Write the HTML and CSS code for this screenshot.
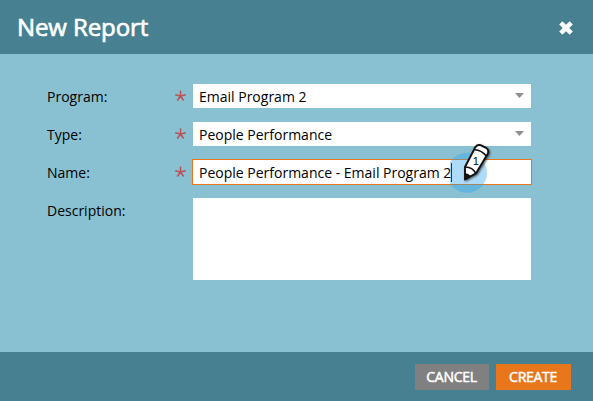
FILE: index.html
```html
<!DOCTYPE html>
<html lang="en">
<head>
<meta charset="utf-8">
<title>New Report</title>
<link rel="stylesheet" href="styles.css">
</head>
<body>
<div class="dialog">
  <header class="header">
    <h1 class="title">New Report</h1>
    <svg class="close" width="16" height="16" viewBox="0 0 16 16"><path d="M2.8 2.8L13.2 13.2M13.2 2.8L2.8 13.2"/></svg>
  </header>
  <main class="form">
    <div class="row">
      <span class="label">Program:</span>
      <svg class="required" width="12" height="12" viewBox="0 0 12 12"><path d="M5.5 6V.6M5.5 6L.2 4.7M5.5 6L10.8 4.7M5.5 6L2.3 10.5M5.5 6L8.7 10.5"/></svg>
      <div class="field select"><span>Email Program 2</span><i class="arrow"></i></div>
    </div>
    <div class="row">
      <span class="label">Type:</span>
      <svg class="required" width="12" height="12" viewBox="0 0 12 12"><path d="M5.5 6V.6M5.5 6L.2 4.7M5.5 6L10.8 4.7M5.5 6L2.3 10.5M5.5 6L8.7 10.5"/></svg>
      <div class="field select"><span>People Performance</span><i class="arrow"></i></div>
    </div>
    <div class="row">
      <span class="label">Name:</span>
      <svg class="required" width="12" height="12" viewBox="0 0 12 12"><path d="M5.5 6V.6M5.5 6L.2 4.7M5.5 6L10.8 4.7M5.5 6L2.3 10.5M5.5 6L8.7 10.5"/></svg>
      <div class="field focused"><span>People Performance - Email Program 2</span><i class="caret"></i></div>
    </div>
    <div class="row">
      <span class="label">Description:</span>
      <div class="field area"></div>
    </div>
  </main>
  <footer class="footer">
    <div class="button cancel">CANCEL</div>
    <div class="button create">CREATE</div>
  </footer>
  <svg class="marker" width="50" height="60" viewBox="450 140 50 60">
    <circle class="halo" cx="467" cy="172.8" r="20"/>
    <g class="pencil">
      <path class="body" d="M465 167L475.3 147.3Q477 144.2 480.5 145.2L486 147.8Q489.2 149.8 487.9 153.4L475.9 173.4L465 179.5Z"/>
      <path class="line" d="M474.2 149.7Q481 149.4 486.2 156"/>
      <path class="line" d="M465 167Q472.5 166.8 475.9 173.4"/>
      <path class="tip" d="M464.9 173.2Q469 173.4 471 176.5L465 179.8Z"/>
    </g>
    <text class="step" x="472.7" y="164.5">1</text>
  </svg>
</div>
</body>
</html>
```

FILE: styles.css
```css
* { box-sizing: border-box; }
body { margin: 0; font-family: "Open Sans", "Noto Sans", sans-serif; font-size: 14px; color: #000; }
.dialog {
  position: relative;
  display: grid;
  grid-template-rows: 54px 298px 49px;
  width: 593px;
  height: 401px;
  background: #89c1d2;
}
.header {
  display: flex;
  align-items: center;
  justify-content: space-between;
  padding: 1px 19px 0 17px;
  background: #468091;
}
.title {
  margin: -2px 0 0;
  color: #fff;
  font-size: 24px;
  font-weight: 400;
  line-height: 34px;
  letter-spacing: -0.1px;
  -webkit-text-stroke: 0.7px #fff;
}
.close path { fill: none; stroke: #fff; stroke-width: 4.6; }
.form {
  display: flex;
  flex-direction: column;
  gap: 14px;
  padding: 30px 0 0 47px;
}
.row { display: grid; grid-template-columns: 128px 18px 338px; height: 24px; }
.label { line-height: 25px; }
.required { margin-top: 6px; }
.required path { fill: none; stroke: #bd5053; stroke-width: 1.5; }
.field {
  grid-column: 3;
  display: flex;
  align-items: center;
  height: 24px;
  padding: 1px 6px 0;
  background: #fff;
  line-height: 24px;
  white-space: nowrap;
}
.select { justify-content: space-between; padding-right: 7px; }
.arrow {
  width: 9px;
  height: 5px;
  margin-top: -2px;
  background: #909090;
  clip-path: polygon(0 0, 100% 0, 50% 100%);
}
.focused { outline: 1px solid #e8761a; }
.caret { width: 1px; height: 19px; background: #000; }
.area { height: 82px; }
.footer {
  display: flex;
  justify-content: flex-end;
  gap: 7px;
  padding: 12px 22px 0 0;
  background: #468091;
}
.button {
  height: 26px;
  padding-right: 1px;
  color: #fff;
  line-height: 26px;
  text-align: center;
  letter-spacing: -0.3px;
  -webkit-text-stroke: 0.5px #fff;
}
.cancel { width: 74px; background: #808080; }
.create { width: 75px; background: #e8761a; }
.marker { position: absolute; left: 450px; top: 140px; }
.halo { fill: #2ba2ed; fill-opacity: 0.38; }
.pencil { filter: drop-shadow(1px 1.5px 1px rgba(0, 0, 0, 0.6)); }
.body { fill: #fff; stroke: #111; stroke-width: 1.9; stroke-linejoin: round; }
.line { fill: none; stroke: #111; stroke-width: 1.5; }
.tip { fill: #111; }
.step { font: 11px "Liberation Sans", sans-serif; fill: #000; }
```
